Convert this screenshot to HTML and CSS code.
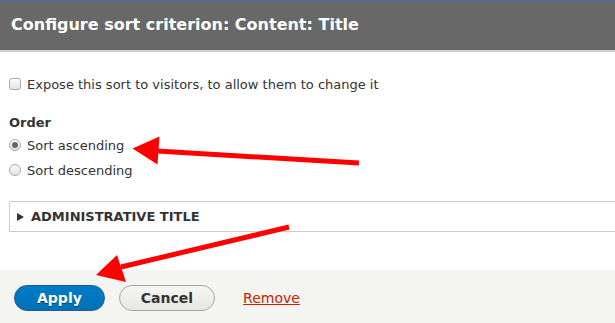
FILE: index.html
```html
<!DOCTYPE html>
<html>
<head>
<meta charset="utf-8">
<link rel="stylesheet" href="styles.css">
</head>
<body>
<div class="dialog">
  <div class="titlebar"><span class="title">Configure sort criterion: Content: Title</span></div>
  <div class="content">
    <label class="row expose"><input type="checkbox" class="cb"><span>Expose this sort to visitors, to allow them to change it</span></label>
    <div class="group">
      <div class="group-label">Order</div>
      <label class="row"><input type="radio" name="order" class="rd" checked><span>Sort ascending</span></label>
      <label class="row row2"><input type="radio" name="order" class="rd"><span>Sort descending</span></label>
    </div>
    <div class="details"><span class="tri"></span><span class="summary">ADMINISTRATIVE TITLE</span></div>
  </div>
  <div class="buttonpane">
    <button class="button primary">Apply</button>
    <button class="button">Cancel</button>
    <a class="danger" href="#">Remove</a>
  </div>
</div>
<svg class="annot" width="615" height="323" viewBox="0 0 615 323">
  <line x1="157" y1="151" x2="359" y2="163" stroke="#f00" stroke-width="5"/>
  <polygon points="132.5,148.5 159.5,136.5 157.5,164.5" fill="#f00"/>
  <line x1="121" y1="267" x2="289" y2="227" stroke="#f00" stroke-width="5"/>
  <polygon points="96,275 117,255 126,282" fill="#f00"/>
</svg>
</body>
</html>
```
FILE: styles.css
```css
html, body { margin: 0; padding: 0; }
body {
  font-family: "DejaVu Sans", sans-serif;
  color: #333;
  background: #fff;
  width: 615px;
  height: 323px;
  overflow: hidden;
  position: relative;
}
.dialog { display: flex; flex-direction: column; height: 323px; }
.titlebar {
  background: #686868;
  border-top: 1px solid #4a6ea9;
  border-bottom: 2px solid #cfcfcf;
  padding: 14px 11px 16px 11px;
  height: 19px;
}
.title { color: #fff; font-weight: bold; font-size: 16px; line-height: 19px; }
.content { padding: 25px 0 0 9px; flex: 1; font-size: 13px; }
.row { display: flex; align-items: flex-start; line-height: 16px; height: 16px; }
.row span { margin-left: 6px; }
.cb, .rd {
  appearance: none;
  -webkit-appearance: none;
  margin: 1px 0 0 0;
  width: 12px;
  height: 12px;
  border: 1px solid #a9a9a9;
  background: linear-gradient(#fdfdfd, #e2e2e2);
  box-sizing: border-box;
  flex: none;
}
.cb { border-radius: 3px; }
.rd { border-radius: 50%; position: relative; }
.rd:checked::after {
  content: "";
  position: absolute;
  left: 2px; top: 2px;
  width: 6px; height: 6px;
  border-radius: 50%;
  background: #666;
}
.group { margin-top: 22px; }
.group-label { font-weight: bold; line-height: 16px; margin-bottom: 7px; }
.row2 { margin-top: 9px; }
.details {
  margin-top: 22px;
  border: 1px solid #ccc;
  border-right: none;
  padding: 7px 0 6px 7px;
  display: flex;
  align-items: center;
  height: 16px;
}
.tri {
  width: 0; height: 0;
  border-left: 7px solid #333;
  border-top: 4px solid transparent;
  border-bottom: 4px solid transparent;
  margin-right: 7px;
}
.summary { font-weight: bold; font-size: 13px; line-height: 16px; }
.buttonpane {
  background: #f4f4f0;
  height: 38px;
  padding: 15px 0 0 14px;
  display: flex;
  align-items: flex-start;
  gap: 14px;
}
.button {
  font-family: "DejaVu Sans", sans-serif;
  font-size: 14px;
  font-weight: bold;
  line-height: 16px;
  padding: 4px 21px;
  height: 26px;
  border: 1px solid #a6a6a6;
  border-radius: 20em;
  background: linear-gradient(#f6f6f3, #e7e7df);
  color: #333;
  margin: 0;
}
.primary {
  padding: 4px 22px;
  border-color: #1e5c90;
  background: linear-gradient(#007bc6, #0071b8);
  color: #fff;
  text-shadow: 0 1px rgba(0,0,0,0.5);
}
.danger {
  color: #c72100;
  font-size: 14px;
  line-height: 16px;
  margin: 5px 0 0 14px;
  text-decoration: underline;
}
.annot { position: absolute; left: 0; top: 0; pointer-events: none; }
```
